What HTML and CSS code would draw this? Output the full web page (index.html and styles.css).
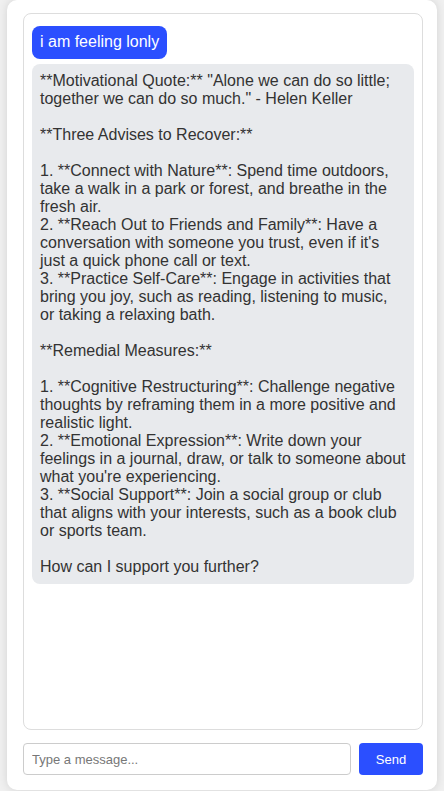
FILE: index.html
```html
<!DOCTYPE html>
<html>
<head>
<meta charset="utf-8">
<link rel="stylesheet" href="styles.css">
</head>
<body>
<div class="card">
  <div class="chat">
    <div class="msg user">i am feeling lonly</div>
    <div class="msg bot">**Motivational Quote:** "Alone we can do so little; together we can do so much." - Helen Keller

**Three Advises to Recover:**

1. **Connect with Nature**: Spend time outdoors, take a walk in a park or forest, and breathe in the fresh air.
2. **Reach Out to Friends and Family**: Have a conversation with someone you trust, even if it's just a quick phone call or text.
3. **Practice Self-Care**: Engage in activities that bring you joy, such as reading, listening to music, or taking a relaxing bath.

**Remedial Measures:**

1. **Cognitive Restructuring**: Challenge negative thoughts by reframing them in a more positive and realistic light.
2. **Emotional Expression**: Write down your feelings in a journal, draw, or talk to someone about what you're experiencing.
3. **Social Support**: Join a social group or club that aligns with your interests, such as a book club or sports team.

How can I support you further?</div>
  </div>
  <div class="composer">
    <input class="field" type="text" placeholder="Type a message...">
    <button class="send">Send</button>
  </div>
</div>
</body>
</html>
```

FILE: styles.css
```css
html, body {
  margin: 0;
  padding: 0;
}
body {
  background: #f0f0f0;
  font-family: "Liberation Sans", Arial, sans-serif;
  height: 791px;
  overflow: hidden;
}
.card {
  box-sizing: border-box;
  width: 430px;
  height: 790px;
  margin-left: 7px;
  background: #fff;
  border-radius: 10px;
  box-shadow: 0 0 10px rgba(0, 0, 0, 0.12);
  padding: 13px 14px 15px 16px;
  display: flex;
  flex-direction: column;
}
.chat {
  flex: 1;
  border: 1px solid #ddd;
  border-radius: 8px;
  padding: 12px 8px 8px 8px;
  display: flex;
  flex-direction: column;
  align-items: flex-start;
  gap: 5px;
  overflow: hidden;
}
.msg {
  font-size: 16px;
  line-height: 18px;
  border-radius: 8px;
  padding: 7px 8px 8px 8px;
}
.user {
  background: #2b4fff;
  color: #fff;
}
.bot {
  background: #e8eaed;
  color: #333;
  white-space: pre-wrap;
  align-self: stretch;
  padding: 8px 8px 8px 8px;
}
.composer {
  display: flex;
  gap: 8px;
  margin-top: 13px;
  height: 32px;
}
.field {
  flex: 1;
  box-sizing: border-box;
  height: 32px;
  border: 1px solid #ccc;
  border-radius: 4px;
  padding: 0 8px;
  font-family: "Liberation Sans", Arial, sans-serif;
  font-size: 13px;
  color: #333;
  outline: none;
}
.field::placeholder {
  color: #777;
}
.send {
  width: 64px;
  height: 32px;
  border: none;
  border-radius: 4px;
  background: #2b4fff;
  color: #fff;
  font-family: "Liberation Sans", Arial, sans-serif;
  font-size: 13px;
}
```
